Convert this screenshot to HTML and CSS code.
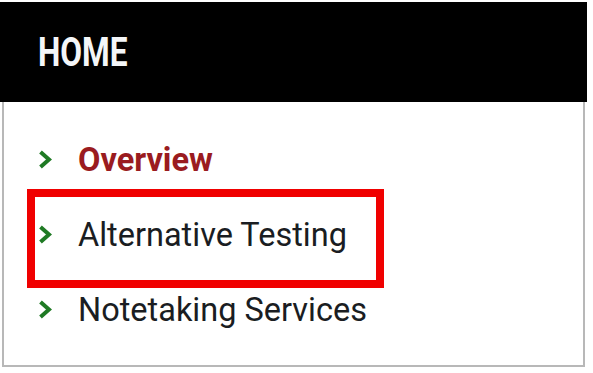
FILE: index.html
```html
<!DOCTYPE html>
<html>
<head>
<meta charset="utf-8">
<link rel="stylesheet" href="styles.css">
</head>
<body>
<div class="panel">
  <div class="panel-head"><span class="panel-title">HOME</span></div>
  <ul class="nav">
    <li class="nav-item active">
      <svg class="chev" viewBox="0 0 14 19" width="14" height="19"><polyline points="2.5,2 11,9.5 2.5,17" fill="none" stroke="#1f7a24" stroke-width="4"/></svg>
      <span>Overview</span>
    </li>
    <li class="nav-item">
      <svg class="chev" viewBox="0 0 14 19" width="14" height="19"><polyline points="2.5,2 11,9.5 2.5,17" fill="none" stroke="#1f7a24" stroke-width="4"/></svg>
      <span>Alternative Testing</span>
    </li>
    <li class="nav-item">
      <svg class="chev" viewBox="0 0 14 19" width="14" height="19"><polyline points="2.5,2 11,9.5 2.5,17" fill="none" stroke="#1f7a24" stroke-width="4"/></svg>
      <span>Notetaking Services</span>
    </li>
    <li class="highlight" aria-hidden="true"></li>
  </ul>
</div>
</body>
</html>
```

FILE: styles.css
```css
html, body {
  margin: 0;
  padding: 0;
  background: #ffffff;
}

.panel {
  width: 587px;
  margin-top: 2px;
  font-family: Roboto, "Liberation Sans", sans-serif;
}

.panel-head {
  height: 100px;
  background: #000000;
  display: flex;
  align-items: center;
  padding-left: 38px;
  box-sizing: border-box;
}

.panel-title {
  display: inline-block;
  color: #f4f6f8;
  font-weight: 700;
  font-size: 40px;
  line-height: 1;
  transform: scaleX(0.79);
  transform-origin: left center;
  margin-top: 2px;
}

.nav {
  position: relative;
  list-style: none;
  margin: 0 2px 0 2px;
  padding: 21px 0 0 34px;
  height: 265px;
  box-sizing: border-box;
  border: 2px solid #b8b8b8;
  border-top: none;
}

.nav-item {
  display: flex;
  align-items: center;
  height: 75px;
  font-size: 32.5px;
  line-height: 75px;
  color: #1a1d22;
}

.nav-item .chev {
  flex: none;
  display: block;
  width: 14px;
  height: 19px;
  margin-right: 26px;
  margin-top: -2px;
}

.nav-item.active {
  color: #9a1b20;
  font-weight: 700;
}

.highlight {
  position: absolute;
  left: 23px;
  top: 87px;
  width: 357px;
  height: 99px;
  box-sizing: border-box;
  border: 8px solid #f00000;
}
```
